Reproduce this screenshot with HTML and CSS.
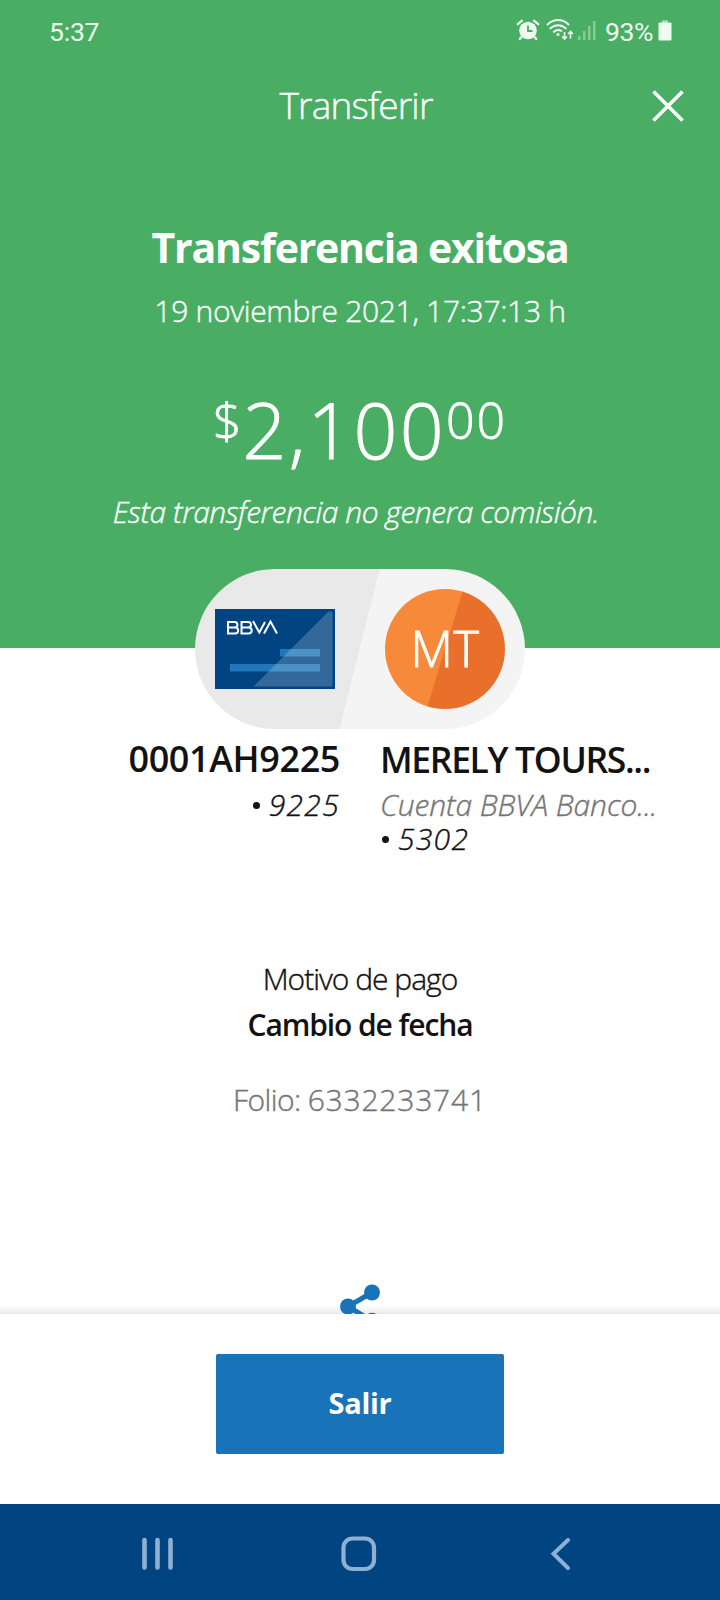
FILE: index.html
```html
<!DOCTYPE html>
<html lang="es">
<head>
<meta charset="utf-8">
<title>Transferir</title>
<link rel="stylesheet" href="styles.css">
</head>
<body>
<div class="screen">
  <section class="hero">
    <div class="status">
      <span class="clock">5:37</span>
      <div class="indicators">
        <svg class="alarm" width="24" height="24" viewBox="0 0 24 24">
          <circle cx="12" cy="12.5" r="8.8" fill="#effbf1"/>
          <path d="M12 7.5v5.5h4.5" fill="none" stroke="#49ae64" stroke-width="1.8"/>
          <path d="M1.8 6.2 6 2.7M22.2 6.2 18 2.7M5.5 19 3.7 21M18.5 19l1.8 2" fill="none" stroke="#effbf1" stroke-width="2.3" stroke-linecap="round"/>
        </svg>
        <svg class="wifi" width="28" height="24" viewBox="0 0 28 24">
          <g fill="none" stroke="#effbf1" stroke-width="2" stroke-linecap="round">
            <path d="M1.500 6.500C8 .6 16.500 .6 22.500 6.500M4.300 10.400c4.500-4.300 11-4.300 15.500 0M7.800 13.800c2.500-2.200 5.200-2.300 7.600-1"/>
          </g>
          <circle cx="12" cy="16.500" r="1.500" fill="#effbf1"/>
          <g fill="none" stroke="#effbf1" stroke-width="1.600"><path d="M18.500 14v7M16.200 18.500l2.300 2.500 2.300-2.500M24.500 20.500v-7M22.200 16l2.300-2.500 2.300 2.500"/></g>
        </svg>
        <svg class="signal" width="20" height="22" viewBox="0 0 20 22">
          <g fill="#86cb98"><rect x="1" y="16" width="2.500" height="4"/><rect x="6" y="11" width="2.500" height="9"/><rect x="11" y="6" width="2.500" height="14"/><rect x="16" y="1" width="2.500" height="19"/></g>
        </svg>
        <span class="percent">93%</span>
        <svg class="battery" width="14" height="22" viewBox="0 0 14 22">
          <path d="M4 1.200h6V4H4z" fill="#a5d9b2"/><rect x=".5" y="3.500" width="13" height="18" rx="1" fill="#effbf1"/>
        </svg>
      </div>
    </div>
    <header class="header">
      <h1 class="header-title">Transferir</h1>
      <svg class="close" width="32" height="32" viewBox="0 0 32 32"><path d="M1.500 1.500 30.500 30.500M30.500 1.500 1.500 30.500" stroke="#fff" stroke-width="3.600"/></svg>
    </header>
    <h2 class="result">Transferencia exitosa</h2>
    <p class="date">19 noviembre 2021, 17:37:13 h</p>
    <div class="amount"><span class="currency">$</span><span class="units">2,100</span><span class="cents">00</span></div>
    <p class="fee">Esta transferencia no genera comisión.</p>
  </section>

  <main class="details">
    <div class="pill">
      <svg class="card" width="120" height="80" viewBox="0 0 120 80">
        <path d="M0 0h120v80H0z" fill="#004481"/>
        <path d="M65 40h40v7.500H65zM15 55h90v7.500H15z" fill="#1f78b9"/>
        <path d="M38.500 77.500 113.500 2.500H117.500v75z" fill="#fff" fill-opacity=".2"/>
        <g fill="none" stroke="#fff" stroke-width="2">
          <path d="M13 13h6.500q3 0 3 2.800t-3 2.800H13zM13 18.600h7q3.200 0 3.200 2.900t-3.200 2.900H13z"/>
          <path d="M26.500 13H33q3 0 3 2.800t-3 2.800h-6.500zM26.500 18.600h7q3.200 0 3.200 2.900t-3.200 2.900h-7z"/>
          <path d="M38 12l6.300 11.500L50 13M49 24.500 55.500 12.500 62 24.500"/>
        </g>
      </svg>
      <div class="avatar">MT</div>
    </div>
    <div class="parties">
      <div class="from">
        <p class="name">0001AH9225</p>
        <p class="account"><span class="bullet"></span>9225</p>
      </div>
      <div class="to">
        <p class="name name-to">MERELY TOURS...</p>
        <p class="bank">Cuenta BBVA Banco...</p>
        <p class="account"><span class="bullet"></span>5302</p>
      </div>
    </div>
    <div class="reason">
      <p class="reason-label">Motivo de pago</p>
      <p class="reason-text">Cambio de fecha</p>
    </div>
    <p class="folio">Folio: <span class="folio-number">6332233741</span></p>
    <div class="share">
      <svg width="44" height="30" viewBox="0 0 44 30">
        <path d="M34 8.500 10 22.500 34 37" fill="none" stroke="#1973b8" stroke-width="5"/>
        <g fill="#1973b8"><circle cx="34" cy="8.500" r="8"/><circle cx="10" cy="22.500" r="8"/><circle cx="34" cy="36.800" r="8"/></g>
      </svg>
    </div>
  </main>

  <footer class="footer"><button class="exit">Salir</button></footer>
  <nav class="nav">
    <svg width="32" height="36" viewBox="0 0 32 36"><path d="M2.500 4v27.500M15.500 4v27.500M28.500 4v27.500" stroke="#8eb0d2" stroke-width="4.600" stroke-linecap="round"/></svg>
    <svg class="home" width="36" height="36" viewBox="0 0 36 36"><rect x="2.500" y="2.500" width="30.500" height="30.500" rx="9" fill="none" stroke="#8eb0d2" stroke-width="4.200"/></svg>
    <svg width="22" height="36" viewBox="0 0 22 36"><path d="M18 4 3.500 17.800 18 32" fill="none" stroke="#8eb0d2" stroke-width="4" stroke-linecap="round"/></svg>
  </nav>
</div>
</body>
</html>
```
FILE: styles.css
```css
* { box-sizing: border-box; }
body, h1, h2, p { margin: 0; }
body {
  font-family: "Open Sans", "Noto Sans", sans-serif;
  font-weight: 300;
  color: #121212;
  background: #fff;
}
svg { display: block; flex: none; }
.screen {
  display: flex;
  flex-direction: column;
  width: 720px;
  height: 1600px;
  overflow: hidden;
}

/* Slightly heavier light weight */
.header-title, .date, .fee, .account, .bank, .reason-label, .folio {
  -webkit-text-stroke: 0.4px currentColor;
}
.amount, .avatar { -webkit-text-stroke: 0.9px currentColor; }

.hero {
  height: 648px;
  flex: none;
  background: #49ae64;
  color: #fff;
  text-align: center;
}
.status {
  display: flex;
  justify-content: space-between;
  height: 60px;
  padding: 0 48px 0 49px;
  font: 400 26.5px/63px Roboto, sans-serif;
  color: #effbf1;
}
.clock { letter-spacing: -0.2px; }
.indicators { display: flex; align-items: flex-start; }
.alarm { margin: 18px 6px 0 0; }
.wifi { margin: 18px 3px 0 0; }
.signal { margin: 20px 8px 0 0; }
.percent { letter-spacing: -0.4px; margin-right: 5px; }
.battery { margin-top: 19px; }

.header {
  display: grid;
  grid-template-columns: 52px 1fr 50px;
  align-items: center;
  height: 89px;
  padding: 0 18px 0 11px;
}
.header-title {
  grid-column: 2;
  padding-right: 3px;
  font-size: 37px;
  font-weight: 300;
  line-height: 50px;
  letter-spacing: -0.8px;
}
.close { margin-top: 3px; }
.result {
  margin-top: 74px;
  font-size: 41px;
  font-weight: 700;
  line-height: 48px;
  letter-spacing: -1.2px;
}
.date {
  margin-top: 22px;
  font-size: 30px;
  line-height: 36px;
  letter-spacing: -0.3px;
}
.amount {
  display: flex;
  justify-content: center;
  align-items: flex-start;
  height: 90px;
  margin-top: 56px;
}
.currency { font-size: 50px; line-height: 71px; margin-right: 1px; }
.units { font-size: 77px; line-height: 90px; letter-spacing: 2.2px; }
.cents { font-size: 50px; line-height: 71px; letter-spacing: 2px; }
.fee {
  margin: 19px 8px 0 0;
  font-size: 30px;
  font-style: italic;
  line-height: 36px;
  letter-spacing: -0.45px;
}

.details {
  display: flex;
  flex-direction: column;
  align-items: center;
  height: 666px;
  flex: none;
}
.pill {
  display: flex;
  align-items: center;
  justify-content: space-between;
  width: 330px;
  height: 160px;
  flex: none;
  margin-top: -79px;
  padding: 0 20px;
  border-radius: 80px;
  background: linear-gradient(104.04deg, #e9e9e9 49.8%, #f4f4f4 50%);
}
.avatar {
  width: 120px;
  height: 120px;
  border-radius: 50%;
  background: linear-gradient(107deg, #f7893b 49.7%, #e9702b 50.3%);
  color: #fff;
  font-size: 49px;
  line-height: 119px;
  letter-spacing: 0.5px;
  text-align: center;
}
.parties {
  display: grid;
  grid-template-columns: 340px 1fr;
  column-gap: 40px;
  width: 100%;
  height: 120px;
  margin-top: 8px;
}
.from { text-align: right; }
.name {
  font-size: 36px;
  font-weight: 600;
  line-height: 44px;
  letter-spacing: -0.4px;
}
.name-to { font-size: 35.500px; letter-spacing: -1.350px; }
.name + p { margin-top: 7px; }
.account, .bank {
  height: 34px;
  font-size: 30px;
  font-style: italic;
  line-height: 34px;
}
.account { letter-spacing: 1.3px; }
.bank { color: #757575; letter-spacing: -0.1px; }
.bullet {
  display: inline-block;
  width: 7px;
  height: 7px;
  margin: 0 9px 7px 2px;
  border-radius: 50%;
  background: #121212;
}
.reason {
  margin-top: 100px;
  text-align: center;
  font-size: 30px;
  line-height: 44px;
}
.reason-label { letter-spacing: -1px; }
.reason-text { margin-top: 2px; font-weight: 600; letter-spacing: -1.1px; }
.folio {
  margin-top: 31px;
  font-size: 30px;
  line-height: 44px;
  letter-spacing: -0.6px;
  color: #757575;
}
.folio-number { letter-spacing: 0.8px; }
.share {
  display: flex;
  justify-content: center;
  width: 100%;
  margin-top: auto;
  background: linear-gradient(#fff 72%, #e9e9e9);
}

.footer {
  display: flex;
  justify-content: center;
  align-items: flex-start;
  height: 190px;
  flex: none;
  padding-top: 40px;
  background: #fff;
}
.exit {
  width: 288px;
  height: 100px;
  padding: 0 0 2px;
  border: 0;
  border-radius: 2px;
  background: #1973b8;
  color: #fff;
  font: 700 29px/96px "Open Sans", sans-serif;
  letter-spacing: -0.3px;
}
.nav {
  display: flex;
  justify-content: space-between;
  align-items: flex-start;
  height: 96px;
  flex: none;
  padding: 32px 148px 0 142px;
  background: #004481;
}
.home { margin-right: 6px; }
```
